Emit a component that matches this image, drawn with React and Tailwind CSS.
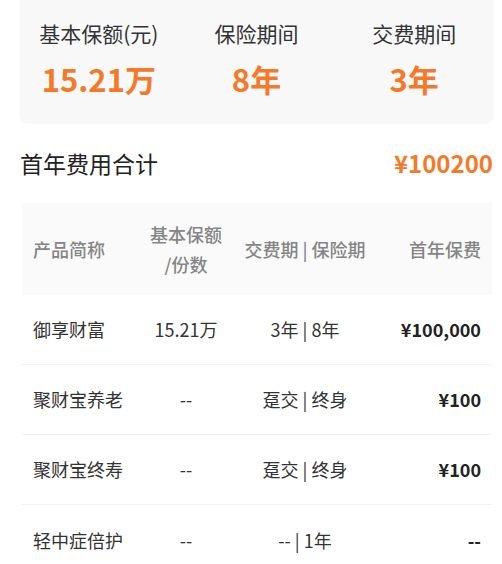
const rows = [
  { name: "御享财富", amount: "15.21万", period: "3年 | 8年", fee: "¥100,000" },
  { name: "聚财宝养老", amount: "--", period: "趸交 | 终身", fee: "¥100" },
  { name: "聚财宝终寿", amount: "--", period: "趸交 | 终身", fee: "¥100" },
  { name: "轻中症倍护", amount: "--", period: "-- | 1年", fee: "--" },
];

const stats = [
  { label: "基本保额(元)", value: "15.21万" },
  { label: "保险期间", value: "8年" },
  { label: "交费期间", value: "3年" },
];

export default function App() {
  return (
    <div
      className="w-[502px] h-[564px] bg-white overflow-hidden"
      style={{ fontFamily: '"Noto Sans CJK SC", "Noto Sans", sans-serif' }}
    >
      <div className="mx-[20px] w-[473px] h-[123px] bg-[#f8f8f9] rounded-b-[8px] shadow-[0_1px_3px_rgba(0,0,0,0.04)] grid grid-cols-3 pt-[18px]">
        {stats.map((s) => (
          <div key={s.label} className="flex flex-col items-center">
            <div className="text-[21px] leading-[30px] text-[#333]">{s.label}</div>
            <div className="text-[31px] leading-[40px] mt-[11px] font-bold text-[#f47a2a]">{s.value}</div>
          </div>
        ))}
      </div>

      <div className="flex items-center justify-between pl-[20px] pr-[9px] mt-[24px] h-[32px]">
        <div className="text-[23px] text-[#222]">首年费用合计</div>
        <div className="text-[24px] font-bold text-[#f47a2a]">¥100200</div>
      </div>

      <div className="ml-[22px] w-[470px] mt-[24px]">
        <div className="h-[92px] bg-[#fafafa] flex items-center px-[11px] text-[18px] font-medium text-[#858585]">
          <div className="w-[110px]">产品简称</div>
          <div className="w-[86px] text-center leading-[30px]">
            基本保额
            <br />
            /份数
          </div>
          <div className="w-[152px] text-center">交费期 | 保险期</div>
          <div className="flex-1 text-right">首年保费</div>
        </div>
        {rows.map((r, i) => (
          <div
            key={r.name}
            className={
              "h-[70px] flex items-center px-[11px] text-[18px] text-[#333] " +
              (i < rows.length - 1 ? "border-b border-[#f2f2f2]" : "")
            }
          >
            <div className="w-[110px]">{r.name}</div>
            <div className="w-[86px] text-center">{r.amount}</div>
            <div className="w-[152px] text-center">{r.period}</div>
            <div className="flex-1 text-right font-bold text-[#222]">{r.fee}</div>
          </div>
        ))}
      </div>
    </div>
  );
}
